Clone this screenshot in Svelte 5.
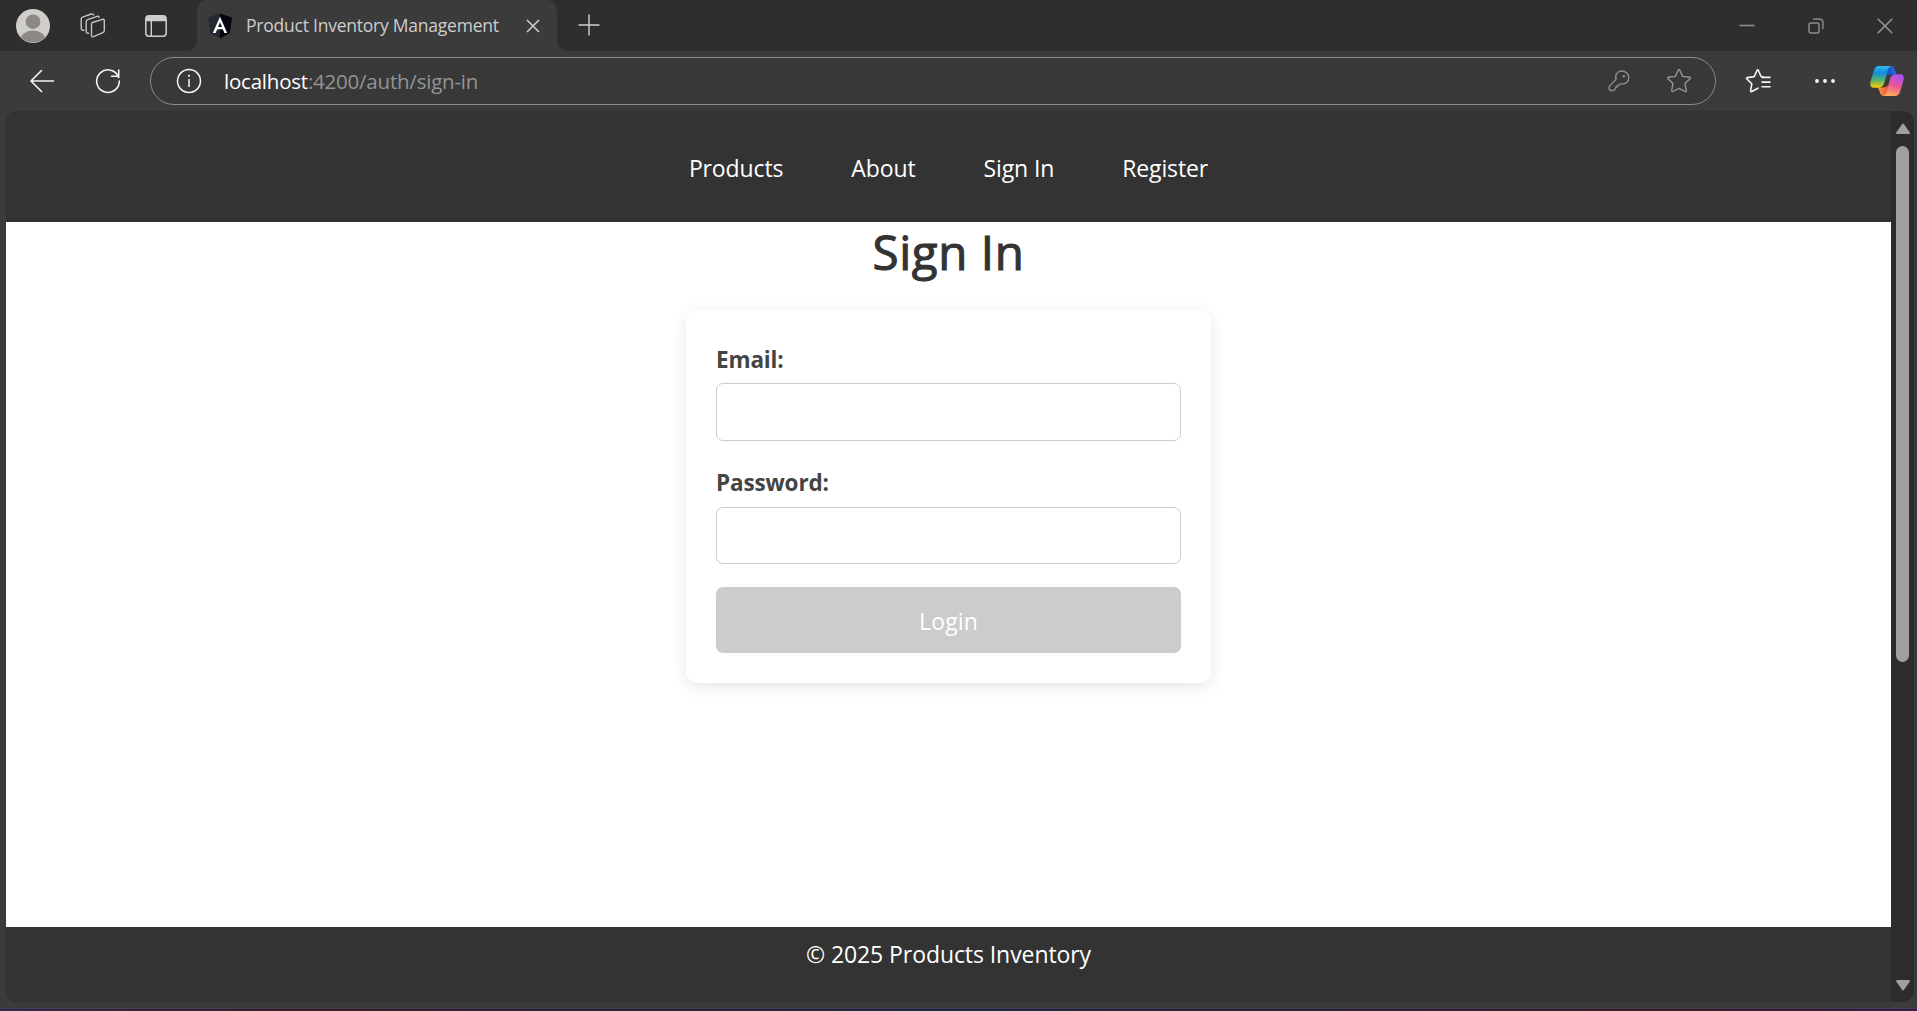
<script>
  const links = ['Products', 'About', 'Sign In', 'Register'];
  let email = $state('');
  let password = $state('');
</script>

<div class="browser">
  <div class="tabs">
    <svg class="avatar" width="34" height="34" viewBox="0 0 34 34">
      <defs><clipPath id="face"><circle cx="17" cy="17" r="16.5" /></clipPath></defs>
      <circle cx="17" cy="17" r="17" fill="#d0cecb" />
      <g clip-path="url(#face)" fill="#8b8886">
        <circle cx="17" cy="12.7" r="7.3" /><ellipse cx="17" cy="31" rx="12.5" ry="9.5" />
      </g>
    </svg>
    <svg class="spaces" width="26" height="26" viewBox="0 0 26 26" fill="none" stroke="#c4c4c4" stroke-width="1.4" stroke-linejoin="round" stroke-linecap="round">
      <path d="M12.5 9.5 22.5 6.3Q24.3 5.8 24.3 7.7V17.5Q24.3 19 22.8 19.6L13.5 23.6Q11.5 24.4 11.5 22.4V11Q11.5 9.8 12.5 9.5Z" />
      <path d="M8.5 20.2Q6.2 20.5 6.2 18.8V8.7Q6.2 7.2 7.6 6.7L17.2 3.3Q18.8 2.9 19 4.4" />
      <path d="M4 17.2Q1.2 17.4 1.2 15.3V6.2Q1.2 4.7 2.6 4.2L11.2 1Q13 .5 13.6 2" />
    </svg>
    <svg class="vertical" width="22" height="22" viewBox="0 0 22 22">
      <rect x=".8" y=".8" width="20.4" height="20.4" rx="3.2" fill="none" stroke="#cecece" stroke-width="1.5" />
      <path d="M1 6.2V4Q1 1 4 1H18Q21 1 21 4V6.2Z" fill="#cecece" /><path d="M6.3 6V21" stroke="#cecece" stroke-width="1.4" />
    </svg>
    <div class="tab">
      <svg width="24" height="26" viewBox="0 0 24 26">
        <path d="M12 .5 23.8 4.5 22 20 12 25.5 2 20 .2 4.5Z" fill="#232831" /><path d="M12 .5 23.8 4.5 22 20 12 25.5Z" fill="#05070e" />
        <path d="M12 3.8 4.8 20H7.6L9.2 16.2H14.8L16.4 20H19.2ZM12 9.3 14 14H10Z" fill="#fff" fill-rule="evenodd" />
      </svg>
      <span>Product Inventory Management</span>
      <svg class="closetab" width="14" height="14" viewBox="0 0 14 14" stroke="#d2d2d2" stroke-width="1.5"><path d="M1 1 13 13M13 1 1 13" /></svg>
    </div>
    <svg class="plus" width="22" height="22" viewBox="0 0 22 22" stroke="#cfcfcf" stroke-width="1.4"><path d="M11 .5V21.5M.5 11H21.5" /></svg>
    <div class="window">
      <svg width="16" height="16" viewBox="0 0 16 16" stroke="#8c8c8c" stroke-width="1.6"><path d="M.5 7.5H15.5" /></svg>
      <svg width="16" height="16" viewBox="0 0 16 16" fill="none" stroke="#8c8c8c" stroke-width="1.5"><rect x="1" y="5" width="10" height="10" rx="2" /><path d="M5 1.4Q5.8.9 7 .9H11Q15 .9 15 5V8.5Q15 10 14.2 11" /></svg>
      <svg width="16" height="16" viewBox="0 0 16 16" stroke="#929292" stroke-width="1.6"><path d="M.7.7 15.3 15.3M15.3.7.7 15.3" /></svg>
    </div>
  </div>

  <div class="toolbar">
    <svg class="back" width="26" height="24" viewBox="0 0 26 24" fill="none" stroke="#f5f5f5" stroke-width="1.6" stroke-linecap="round" stroke-linejoin="round"><path d="M12.5 1.5 2 12 12.5 22.5M2 12H24.5" /></svg>
    <svg class="reload" width="26" height="26" viewBox="0 0 26 26" fill="none" stroke="#f5f5f5" stroke-width="1.6" stroke-linecap="round"><path d="M23.7 9.5A11.3 11.3 0 1 0 24.3 13M23.7 2V8.2H16.5" /></svg>
    <div class="address">
      <svg class="info" width="26" height="26" viewBox="0 0 26 26" fill="none" stroke="#f5f5f5" stroke-width="1.5"><circle cx="13" cy="13" r="11.5" /><path d="M13 11V19" /><circle cx="13" cy="7.8" r="1.1" fill="#f5f5f5" stroke="none" /></svg>
      <span class="url"><b>localhost</b>:4200/auth/sign-in</span>
      <svg class="key" width="22" height="22" viewBox="0 0 22 22" fill="none" stroke="#8b8b8b" stroke-width="1.4" stroke-linejoin="round"><path d="M8.1 9.3C6.5 4.5 9.6 1 13.8 1 18 1 20.8 4 20.8 7.6 20.8 11.8 17.2 14.8 12.9 13.6L11.4 15.1H9.3V17H7.5V19L5.6 20.5H2.6Q1.2 20.5 1.2 19V16.6Z" /><circle cx="15.8" cy="6.2" r="1.3" fill="#8b8b8b" stroke="none" /></svg>
      <svg class="star" width="26" height="26" viewBox="0 0 26 26" fill="none" stroke="#959595" stroke-width="1.4" stroke-linejoin="round"><path d="M12.2 2.2Q13 .8 13.8 2.2L16.7 8.4 23.5 9.3Q25 9.7 24 10.8L19 15.6 20.3 22.6Q20.4 24 19.1 23.5L13 20.3 6.9 23.5Q5.6 24 5.7 22.6L7 15.6 2 10.8Q1 9.7 2.5 9.3L9.3 8.4Z" /></svg>
    </div>
    <svg class="favorites" width="26" height="26" viewBox="0 0 26 26" fill="none" stroke="#f5f5f5" stroke-width="1.6" stroke-linejoin="round" stroke-linecap="round"><path d="M18.5 9 16 8.5 13.4 2.5Q12.7 1 12 2.5L9.2 8.6 2.3 9.6Q1 10 1.9 11L6.8 15.8 5.6 22.6Q5.6 24 6.8 23.5L13 20.2M17 9.4H25M17 14.1H25M17 18.8H25" /></svg>
    <svg class="more" width="20" height="6" viewBox="0 0 20 6" fill="#f5f5f5"><circle cx="2" cy="3" r="1.9" /><circle cx="10" cy="3" r="1.9" /><circle cx="18" cy="3" r="1.9" /></svg>
    <svg class="copilot" width="34" height="32" viewBox="0 0 34 32">
      <defs>
        <linearGradient id="cool" x1="0" y1="0" x2="0" y2="1"><stop offset="0" stop-color="#36b8f4" /><stop offset=".3" stop-color="#118de0" /><stop offset=".65" stop-color="#57b36a" /><stop offset="1" stop-color="#ffd000" /></linearGradient>
        <linearGradient id="warm" x1=".6" y1="0" x2=".3" y2="1"><stop offset="0" stop-color="#a653f2" /><stop offset=".5" stop-color="#ed5695" /><stop offset="1" stop-color="#ffb257" /></linearGradient>
        <linearGradient id="navy"><stop offset="0" stop-color="#1248b8" /><stop offset="1" stop-color="#2870e8" /></linearGradient>
        <linearGradient id="fire"><stop offset="0" stop-color="#ffa044" /><stop offset="1" stop-color="#e94b40" /></linearGradient>
      </defs>
      <path d="M15 1H21Q23.6 1 24.4 4L26.5 9.5H21Q18 9.5 16.6 12Z" fill="url(#navy)" />
      <path d="M8 22.5H13Q16 22.5 17.4 20L19 31H14Q11 31 10.2 28Z" fill="url(#fire)" />
      <path d="M9 1H21.5Q18.8 1.5 17.8 5L14.2 18Q13 22.8 8 22.8H4Q-1 22.8 .7 16L4 5Q5.3 1 9 1Z" fill="url(#cool)" />
      <path d="M25 31H13Q15.7 30.5 16.6 27L20 14Q21.2 9.2 26 9.2H30Q35 9.2 33.3 16L30 27Q28.7 31 25 31Z" fill="url(#warm)" />
    </svg>
  </div>

  <div class="viewport">
    <div class="page">
      <nav>{#each links as link}<a href="#{link}">{link}</a>{/each}</nav>
      <main>
        <h1>Sign In</h1>
        <form>
          <label for="email">Email:</label>
          <input id="email" type="email" bind:value={email} />
          <label class="second" for="password">Password:</label>
          <input class="short" id="password" type="password" bind:value={password} />
          <button disabled={!email || !password}>Login</button>
        </form>
      </main>
      <footer>© 2025 Products Inventory</footer>
    </div>
    <div class="scrollbar">
      <svg width="16" height="12" viewBox="0 0 16 12"><path d="M7 1.2Q8 0 9 1.2L14.8 9.4Q15.2 11 13.8 11H2.2Q.8 11 1.2 9.4Z" fill="#9f9f9f" /></svg>
      <div class="thumb"></div>
      <svg class="down" width="16" height="12" viewBox="0 0 16 12"><path d="M7 10.8Q8 12 9 10.8L14.8 2.6Q15.2 1 13.8 1H2.2Q.8 1 1.2 2.6Z" fill="#9f9f9f" /></svg>
    </div>
  </div>
  <div class="edge"></div>
</div>

<style>
  :global(body) { margin: 0; overflow: hidden; }
  .browser { width: 1917px; height: 1011px; box-sizing: border-box; display: flex; flex-direction: column; background: #3b3b3b; font-family: "Open Sans", "Noto Sans", sans-serif; overflow: hidden; }
  svg { display: block; flex: none; }
  .tabs { height: 51px; flex: none; display: flex; align-items: center; background: #2e2e2e; }
  .avatar { margin-left: 16px; }
  .spaces { margin-left: 30px; }
  .vertical { margin-left: 39px; }
  .tab { position: relative; width: 360px; height: 51px; margin-left: 30px; box-sizing: border-box; padding-left: 11px; display: flex; align-items: center; background: #3b3b3b; border-radius: 10px 10px 0 0; }
  .tab::before, .tab::after { content: ""; position: absolute; bottom: 0; width: 10px; height: 10px; }
  .tab::before { left: -10px; background: radial-gradient(circle at 0 0, #2e2e2e 9.5px, #3b3b3b 10px); }
  .tab::after { right: -10px; background: radial-gradient(circle at 100% 0, #2e2e2e 9.5px, #3b3b3b 10px); }
  .tab span { width: 254px; margin: -1px 0 0 14px; color: #cdcdcd; font-size: 17.5px; letter-spacing: -.23px; white-space: nowrap; }
  .closetab { margin-left: 26px; }
  .plus { margin: -2px 0 0 21px; }
  .window { margin: 0 24px 0 auto; display: flex; gap: 53px; }
  .toolbar { height: 60px; flex: none; display: flex; align-items: center; }
  .back { margin-left: 29px; }
  .reload { margin-left: 40px; }
  .address { width: 1566px; height: 48px; margin-left: 29px; box-sizing: border-box; border: 1.5px solid #8a8a8a; border-radius: 24px; display: flex; align-items: center; background: #383838; }
  .info { margin-left: 25px; }
  .url { margin-left: 22px; color: #949494; font-size: 20.5px; letter-spacing: -.22px; white-space: nowrap; }
  .url b { color: #fff; font-weight: 400; }
  .key { margin-left: auto; }
  .star { margin: 0 23px 0 36px; }
  .favorites { margin-left: 29px; }
  .more { margin-left: 44px; }
  .copilot { margin-left: 35px; }
  .viewport { width: 1908px; height: 891px; flex: none; margin-left: 6px; display: flex; border-radius: 12px; overflow: hidden; background: #2c2c2c; }
  .page { width: 1885px; display: flex; flex-direction: column; background: #333; }
  nav { height: 111px; display: flex; justify-content: center; align-items: center; gap: 68px; background: #333; }
  nav a { color: #fff; text-decoration: none; font-size: 23px; line-height: 32px; letter-spacing: -.12px; margin-top: 3px; }
  main { height: 705px; display: flex; flex-direction: column; align-items: center; background: #fff; }
  h1 { margin: 1px 0 29px; height: 58px; line-height: 58px; font-size: 47.5px; font-weight: 400; color: #333; letter-spacing: .6px; -webkit-text-stroke: 1.1px #333; }
  form { width: 525px; height: 373px; box-sizing: border-box; padding: 34px 30px 30px; border-radius: 12px; background: #fff; box-shadow: 0 4px 16px rgba(0, 0, 0, .1); display: flex; flex-direction: column; }
  label { height: 30px; margin-bottom: 9px; line-height: 32px; font-size: 22.5px; font-weight: 700; color: #444; letter-spacing: -.15px; }
  .second { margin: 26px 0 10px; }
  input { height: 58px; flex: none; box-sizing: border-box; border: 1px solid #ccc; border-radius: 7px; padding: 0 14px; font: inherit; background: #fff; }
  .short { height: 57px; }
  button { height: 66px; flex: none; margin-top: 23px; border: 0; border-radius: 7px; padding: 2px 0 0; background: #ccc; color: #fff; font: 23px "Open Sans", "Noto Sans", sans-serif; letter-spacing: .15px; }
  footer { height: 75px; box-sizing: border-box; padding-top: 11px; line-height: 32px; text-align: center; background: #333; color: #fff; font-size: 23px; letter-spacing: -.08px; }
  .scrollbar { width: 23px; display: flex; flex-direction: column; align-items: center; padding: 12px 0 0; box-sizing: border-box; }
  .thumb { width: 13px; height: 516px; margin-top: 11px; border-radius: 7px; background: #9f9f9f; }
  .down { margin: auto 0 11px; }
  .edge { height: 2px; margin-top: auto; border-top: 1px solid #443e4f; background: linear-gradient(90deg, #30294b, #3a1c24 17%, #2b2338 27%, #1b2942 50%, #2b2338 70%, #3a1c24 87%, #381c4b); }
</style>
